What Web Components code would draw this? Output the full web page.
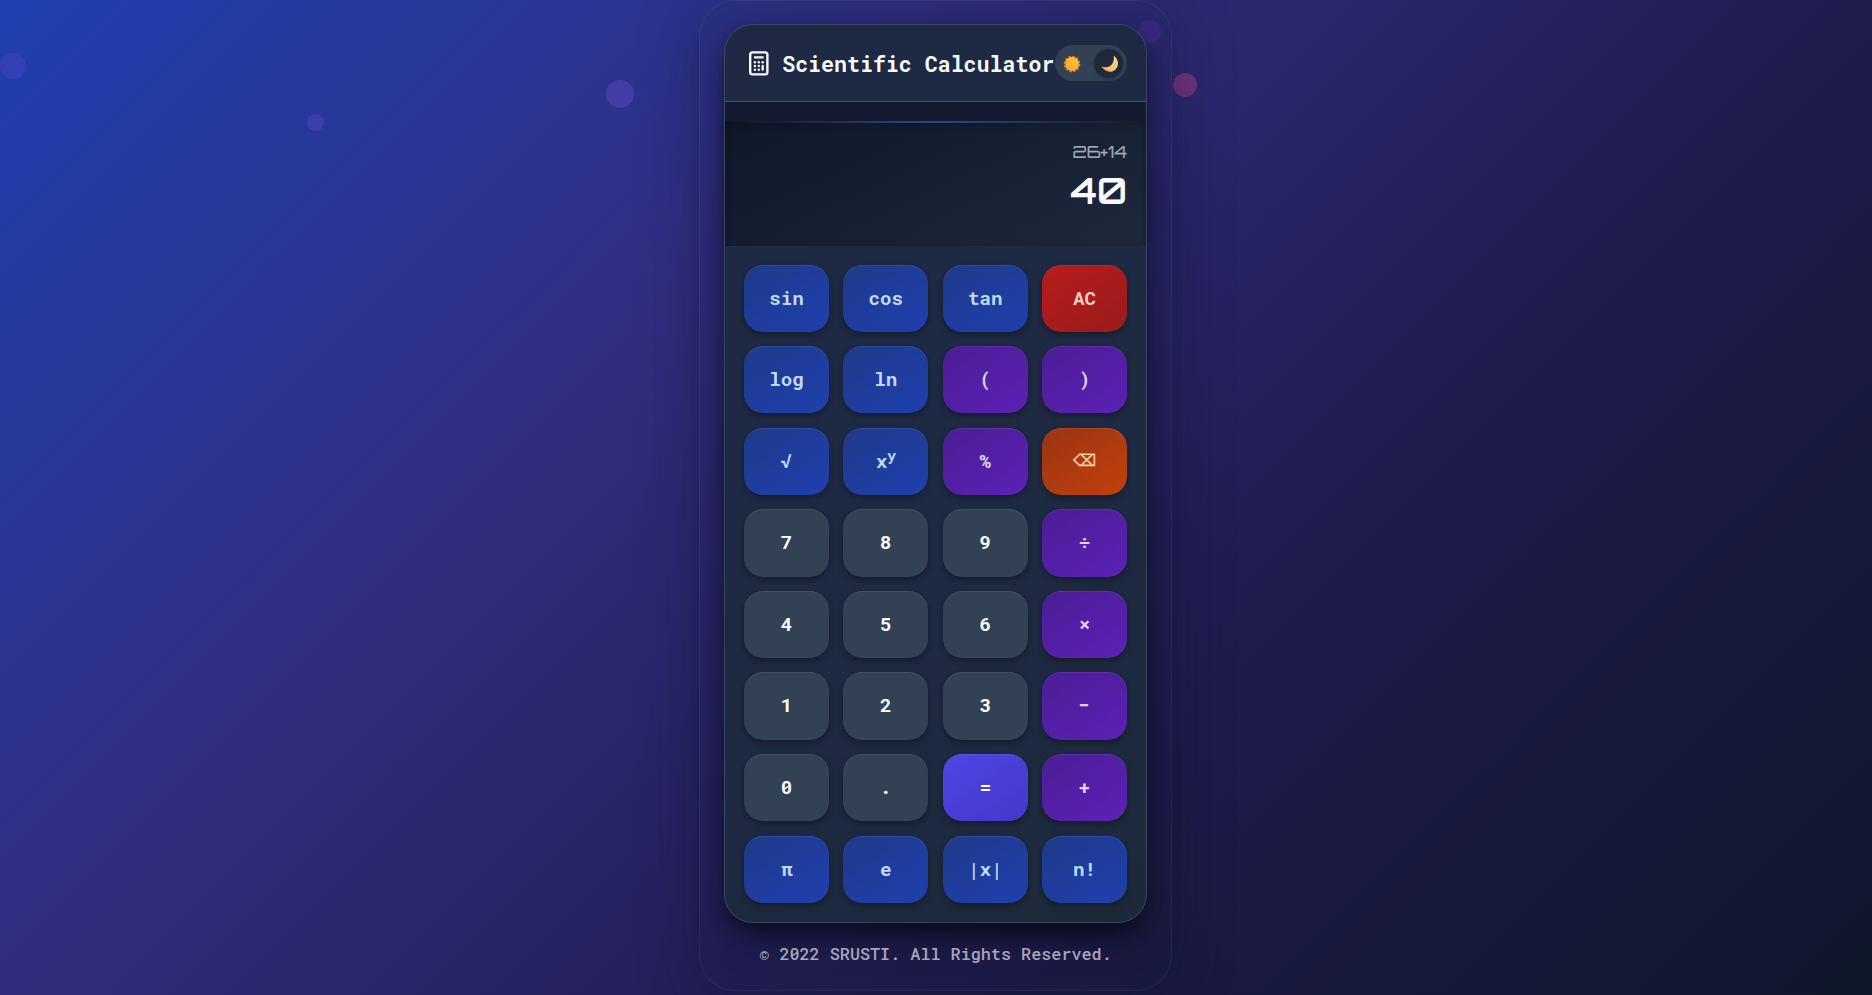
<!DOCTYPE html>
<html lang="en">
<head>
<meta charset="utf-8">
<title>Scientific Calculator</title>
<style>
html,body{margin:0;height:100%;overflow:hidden;background:#1e1b4b}
</style>
</head>
<body>
<calc-page></calc-page>
<script>
const MONO = '"Roboto Mono","DejaVu Sans Mono",monospace';
const define = (name, html) => customElements.define(name, class extends HTMLElement {
  constructor(){ super(); this.attachShadow({mode:'open'}).innerHTML = html; }
});

define('calc-icon', `<style>:host{display:block;width:20px;height:25px}svg{display:block}</style>
<svg width="20" height="25" viewBox="0 0 20 25" fill="none" stroke="#f8fafc">
<rect x="1.2" y="1.4" width="17.2" height="22" rx="2.4" stroke-width="2.4"/>
<path d="M5 6.4H14.6" stroke-width="2.3"/>
<g fill="#f8fafc" stroke="none"><circle cx="5.9" cy="11.3" r="1.2"/><circle cx="9.8" cy="11.3" r="1.2"/><circle cx="13.7" cy="11.3" r="1.2"/>
<circle cx="5.9" cy="15" r="1.2"/><circle cx="9.8" cy="15" r="1.2"/><circle cx="5.9" cy="18.7" r="1.2"/><circle cx="9.8" cy="18.7" r="1.2"/></g>
<path d="M13.7 15V18.7" stroke-width="2.3" stroke-linecap="round"/></svg>`);

define('theme-toggle', `<style>
:host{display:flex;box-sizing:border-box;width:72px;height:36px;border-radius:18px;background:#334155;align-items:center;justify-content:space-between;padding:0 4px 0 8px;flex:none}
.thumb{width:29px;height:29px;border-radius:50%;background:#1e293b;display:grid;place-items:center;box-shadow:0 1px 3px #0003}
svg{display:block}
.sun{margin-top:1.5px}
.moon{margin:2px 0 0 3px}
</style>
<svg class="sun" width="18" height="18" viewBox="0 0 18 18"><defs><linearGradient id="s" x1="1" y1="0" x2="0" y2="1"><stop stop-color="#fccf3c"/><stop offset="1" stop-color="#f5a02b"/></linearGradient></defs>
<circle cx="9" cy="9" r="7.3" fill="none" stroke="#e8762a" stroke-width="1.9" stroke-dasharray="2.5 1.322"/><circle cx="9" cy="9" r="6.9" fill="url(#s)"/></svg>
<div class="thumb"><svg class="moon" width="18" height="18" viewBox="0 0 18 18"><defs><linearGradient id="m" x1="0" y1="1" x2="1" y2="0"><stop stop-color="#f5964c"/><stop offset=".5" stop-color="#ffc873"/><stop offset="1" stop-color="#ffd98a"/></linearGradient></defs>
<path d="M12.6 .6C18.2 4.4 18.2 11.6 14 14.9C9.4 18.5 3 16.4.6 11.6C4.5 13 8.8 12.3 11.2 9C13 6.3 13.1 3.3 12.6.6Z" fill="url(#m)"/></svg></div>`);

define('calc-header', `<style>
:host{display:flex;align-items:center;height:76px;border-bottom:1px solid #475569;padding:0 19px 0 23.6px}
h1{margin:1px 0 0 13.6px;font:700 21.6px/30px ${MONO};color:#f8fafc;white-space:nowrap;width:273px}
theme-toggle{margin-left:auto}
</style><calc-icon></calc-icon><h1><slot></slot></h1><theme-toggle></theme-toggle>`);

define('calc-display', `<style>
:host{display:block;padding-top:19px;background:#151a30}
.screen{box-sizing:border-box;height:125px;background:linear-gradient(155deg,#0f172a,#1e293b);box-shadow:inset 0 2px 10px #0004;padding:0 19px;text-align:right;font-family:Orbitron,Inter,sans-serif;display:flex;flex-direction:column;align-items:flex-end}
.line{width:100%;padding:0 19px;height:2px;background:linear-gradient(90deg,transparent,#6366f180,transparent);align-self:center}
.expr{color:#a2aab7;font-size:17px;line-height:24px;margin-top:17px;-webkit-text-stroke:.2px currentColor}
.result{color:#f8fafc;font-size:36px;font-weight:600;line-height:44px;margin-top:5px}
</style><div class="screen"><div class="line"></div><div class="expr"><slot name="expr"></slot></div><div class="result"><slot></slot></div></div>`);

define('calc-key', `<style>
:host{display:flex;align-items:center;justify-content:center;box-sizing:border-box;height:67.2px;border-radius:19.2px;font:700 19.2px/24px ${MONO};color:#bfdbfe;background:linear-gradient(145deg,#1e3a8a,#1e40af);box-shadow:0 4px 7px -1px #0000003a,0 2px 4px #0000001f,inset 0 1px 0 #ffffff14}
:host([kind=num]){background:#334155;color:#f8fafc}
:host([kind=op]){background:linear-gradient(145deg,#4c1d95,#5b21b6);color:#ddd6fe}
:host([kind=clear]){background:linear-gradient(145deg,#b91c1c,#991b1b);color:#fecaca}
:host([kind=del]){background:linear-gradient(145deg,#9a3412,#c2410c);color:#fed7aa;font-family:"DejaVu Sans",sans-serif;font-weight:400;font-size:16.4px;-webkit-text-stroke:.25px currentColor}
:host([kind=eq]){background:linear-gradient(145deg,#4f46e5,#4338ca);color:#fff}
span{position:relative;top:-.6px}
::slotted(sup){font-size:14.4px;line-height:0;vertical-align:super}
</style><span><slot></slot></span>`);

define('calc-pad', `<style>:host{display:grid;grid-template-columns:repeat(4,1fr);gap:14.4px 14.37px;padding:18.2px 19px 19.25px}</style><slot></slot>`);

define('calc-card', `<style>
:host{display:block;box-sizing:border-box;width:423px;border:1px solid #3a4560;border-radius:29px;overflow:hidden;background:linear-gradient(145deg,#1f2945,#1e2942 65%,#1d293a);box-shadow:0 18px 36px -8px #0008,0 6px 16px #0004}
</style><slot></slot>`);

define('calc-panel', `<style>
:host{display:flex;flex-direction:column;align-items:center;box-sizing:border-box;width:472.6px;height:991px;margin-left:699.2px;padding-top:23.4px;border:1px solid #ffffff0d;border-radius:36px;background:#0f172a22;box-shadow:0 8px 60px #0f172a66;position:relative}
footer{font:500 16.8px/24px ${MONO};color:#a7a5b9;margin-top:18.6px;white-space:nowrap}
</style><slot></slot><footer><slot name="footer"></slot></footer>`);

define('floating-dot', `<style>:host{position:absolute;display:block;border-radius:50%}</style>`);

define('calc-page', `<style>
:host{display:block;position:relative;height:995px;overflow:hidden;background:linear-gradient(135deg,#1e40af 0%,#312e81 33.33%,#1e1b4b 66.66%,#0f172a 100%)}
</style>
<floating-dot style="left:0;top:52.5px;width:26px;height:26px;background:#7c4ae035"></floating-dot>
<floating-dot style="left:307px;top:113.5px;width:17px;height:17px;background:#8b5cf633"></floating-dot>
<floating-dot style="left:606px;top:80px;width:28px;height:28px;background:#8b5cf63c"></floating-dot>
<floating-dot style="left:1138px;top:20px;width:23px;height:23px;background:#8b3aed28"></floating-dot>
<floating-dot style="left:1173px;top:73px;width:24px;height:24px;background:#ec48995c"></floating-dot>
<calc-panel><calc-card><calc-header>Scientific Calculator</calc-header>
<calc-display><span slot="expr">26+14</span>40</calc-display>
<calc-pad>
<calc-key>sin</calc-key><calc-key>cos</calc-key><calc-key>tan</calc-key><calc-key kind="clear">AC</calc-key>
<calc-key>log</calc-key><calc-key>ln</calc-key><calc-key kind="op">(</calc-key><calc-key kind="op">)</calc-key>
<calc-key>√</calc-key><calc-key>x<sup>y</sup></calc-key><calc-key kind="op">%</calc-key><calc-key kind="del">⌫</calc-key>
<calc-key kind="num">7</calc-key><calc-key kind="num">8</calc-key><calc-key kind="num">9</calc-key><calc-key kind="op">÷</calc-key>
<calc-key kind="num">4</calc-key><calc-key kind="num">5</calc-key><calc-key kind="num">6</calc-key><calc-key kind="op">×</calc-key>
<calc-key kind="num">1</calc-key><calc-key kind="num">2</calc-key><calc-key kind="num">3</calc-key><calc-key kind="op">−</calc-key>
<calc-key kind="num">0</calc-key><calc-key kind="num">.</calc-key><calc-key kind="eq">=</calc-key><calc-key kind="op">+</calc-key>
<calc-key>π</calc-key><calc-key>e</calc-key><calc-key>|x|</calc-key><calc-key>n!</calc-key>
</calc-pad></calc-card><span slot="footer">© 2022 SRUSTI. All Rights Reserved.</span></calc-panel>`);
</script>
</body>
</html>
